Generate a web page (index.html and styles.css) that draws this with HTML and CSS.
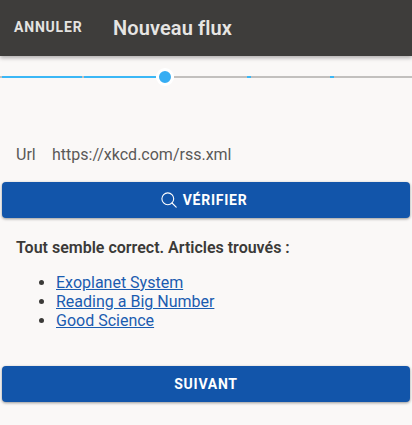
FILE: index.html
```html
<!DOCTYPE html>
<html lang="fr">
<head>
<meta charset="utf-8">
<title>Nouveau flux</title>
<link rel="stylesheet" href="styles.css">
</head>
<body>
<header class="bar">
  <span class="cancel">ANNULER</span>
  <h1 class="title">Nouveau flux</h1>
</header>
<div class="stepper">
  <span class="seg rest notch"></span>
  <span class="seg done first"></span>
  <span class="seg rest notch"></span>
  <span class="seg done second"></span>
  <span class="thumb"></span>
  <span class="seg rest third"></span>
  <span class="tick"></span>
  <span class="seg rest fourth"></span>
  <span class="tick"></span>
  <span class="seg rest fifth"></span>
</div>
<main class="content">
  <div class="field">
    <span class="label">Url</span>
    <span class="value">https://xkcd.com/rss.xml</span>
  </div>
  <button class="btn check" type="button">
    <svg class="icon" viewBox="0 0 16 16" width="16" height="16" aria-hidden="true">
      <circle cx="6.8" cy="6.8" r="5.9" fill="none" stroke="#fff" stroke-width="1.1"/>
      <path d="M11 11 L15.2 15.2" fill="none" stroke="#fff" stroke-width="1.1" stroke-linecap="round"/>
    </svg>
    <span>VÉRIFIER</span>
  </button>
  <p class="status">Tout semble correct. Articles trouvés :</p>
  <ul class="articles">
    <li><a href="#">Exoplanet System</a></li>
    <li><a href="#">Reading a Big Number</a></li>
    <li><a href="#">Good Science</a></li>
  </ul>
  <button class="btn next" type="button"><span>SUIVANT</span></button>
</main>
</body>
</html>
```
FILE: styles.css
```css
* { box-sizing: border-box; }
html, body { height: 100%; }
body {
  margin: 0;
  overflow: hidden;
  background: #faf8f7;
  color: #3b3a38;
  font-family: Roboto, "Liberation Sans", sans-serif;
  font-size: 16px;
}
.bar {
  height: 56px;
  background: #3e3d3b;
  display: flex;
  align-items: center;
  box-shadow: 0 2px 4px rgba(0, 0, 0, 0.3);
  padding-left: 14px;
}
.cancel {
  color: #e4e3e1;
  font-size: 14px;
  font-weight: 700;
  letter-spacing: 0.8px;
  width: 99px;
  margin-top: -2px;
}
.title {
  margin: 0;
  color: #e6e5e3;
  font-size: 20px;
  font-weight: 600;
  letter-spacing: 0.1px;
  line-height: 24px;
}
.stepper {
  display: flex;
  align-items: center;
  height: 18px;
  margin-top: 12px;
}
.seg { height: 2px; display: block; }
.done { background: #3bb7f6; }
.rest { background: #c2c0be; }
.notch { width: 2px; }
.first { width: 80px; }
.second { width: 72px; }
.thumb {
  flex: none;
  width: 18px;
  height: 18px;
  border-radius: 50%;
  background: #36adf3;
  border: 3px solid #fff;
}
.third { width: 73px; }
.fourth { width: 79px; }
.fifth { flex: 1; }
.tick { width: 4px; height: 2px; background: #3bb7f6; flex: none; }
.content { display: block; }
.field {
  display: flex;
  margin-top: 59px;
  padding-left: 16px;
  line-height: 19px;
  color: #5a5957;
}
.label { width: 36px; }
.btn {
  display: flex;
  align-items: center;
  justify-content: center;
  gap: 6px;
  width: 408px;
  height: 36px;
  margin: 0 2px;
  padding: 0;
  border: 0;
  border-radius: 4px;
  background: #1255aa;
  color: #fff;
  font-family: inherit;
  font-size: 14px;
  font-weight: 700;
  letter-spacing: 0.75px;
  box-shadow: 0 1px 3px rgba(0, 0, 0, 0.4);
}
.check { margin-top: 18px; padding-right: 4px; }
.icon { flex: none; }
.status {
  margin: 20px 0 0;
  padding-left: 16px;
  font-weight: 600;
  line-height: 19px;
}
.articles {
  margin: 16px 0 0;
  padding-left: 56px;
  line-height: 19px;
}
.articles a { color: #1a5cb0; }
.next { margin-top: 36px; }
```
